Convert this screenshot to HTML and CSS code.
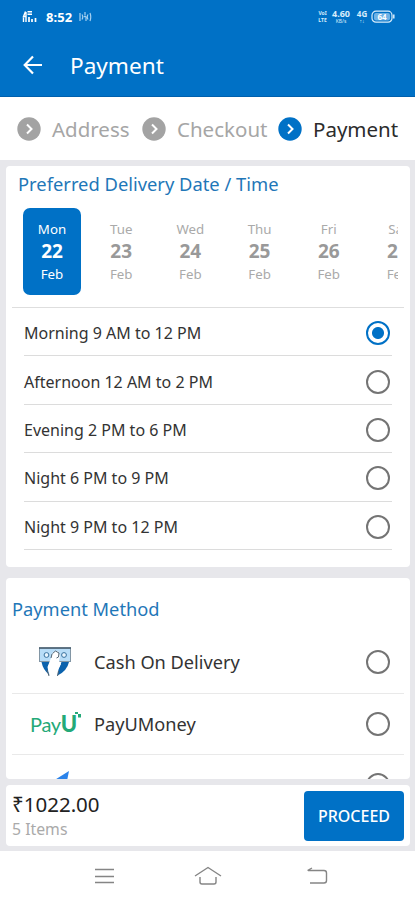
FILE: index.html
```html
<!DOCTYPE html>
<html lang="en">
<head>
    <meta charset="UTF-8">
    <meta name="viewport" content="width=device-width, initial-scale=1.0">
    <title>Payment</title>
    <link rel="stylesheet" href="styles.css">
</head>
<body>
    <div class="header">
        <div class="status">
            <svg class="signal" width="18" height="14" viewBox="0 0 18 14" fill="none" stroke="#fff">
                <path d="M3.500 1.500L1.500 6.500h3M4 2v10M5.500 1.800H10M5.500 4.300H10M1.500 7.500v4.500" stroke-width="1.400"/>
                <path d="M7 12V7M10 12V9M13.500 12V8" stroke-width="1.700"/>
            </svg>
            <span class="clock">8:52</span>
            <svg class="hotspot" width="14" height="12" viewBox="0 0 14 12" fill="none" stroke="#a5d0f0" stroke-width="1.200">
                <path d="M2 2v8M4 3.500q1.500 2.500 0 5M7 1v3M6 6l1-1 1 1v4M10 3.500q-1.500 2.500 0 5M12 2q1.500 4 0 8"/>
            </svg>
            <div class="tiny volte"><span>VoI</span><span>LTE</span></div>
            <div class="tiny speed"><b>4.60</b><span>KB/s</span></div>
            <div class="tiny net"><b>4G</b><span>↑↓</span></div>
            <svg width="24" height="14" viewBox="0 0 24 14" fill="none" stroke="#d9edfb">
                <rect x="1" y="1.200" width="20" height="11" rx="4" stroke-width="1.200"/>
                <rect x="3" y="3" width="16" height="7.500" rx="2" fill="#6fb2e5" stroke="none"/>
                <path d="M22.800 4.500v4" stroke-width="1.500"/>
                <text x="11" y="9.800" class="level">64</text>
            </svg>
        </div>
        <div class="title">
            <svg width="20" height="20" viewBox="0 0 20 20" fill="none" stroke="#fff" stroke-width="2.200">
                <path d="M19 10H2M10 1.500L1.700 10l8.300 8.500"/>
            </svg>
            <h1>Payment</h1>
        </div>
    </div>

    <div class="steps">
        <div class="step address">
            <svg width="24" height="24" viewBox="0 0 24 24"><circle cx="12" cy="12" r="11.700"/><path d="M10 7.500l4.500 4.500-4.500 4.500"/></svg>
            <span>Address</span>
        </div>
        <div class="step checkout">
            <svg width="24" height="24" viewBox="0 0 24 24"><circle cx="12" cy="12" r="11.700"/><path d="M10 7.500l4.500 4.500-4.500 4.500"/></svg>
            <span>Checkout</span>
        </div>
        <div class="step active">
            <svg width="24" height="24" viewBox="0 0 24 24"><circle cx="12" cy="12" r="11.700"/><path d="M10 7.500l4.500 4.500-4.500 4.500"/></svg>
            <span>Payment</span>
        </div>
    </div>

    <div class="content">
        <div class="card delivery">
            <h2>Preferred Delivery Date / Time</h2>
            <div class="dates">
                <div class="date selected"><span>Mon</span><b>22</b><span>Feb</span></div>
                <div class="date"><span>Tue</span><b>23</b><span>Feb</span></div>
                <div class="date"><span>Wed</span><b>24</b><span>Feb</span></div>
                <div class="date"><span>Thu</span><b>25</b><span>Feb</span></div>
                <div class="date"><span>Fri</span><b>26</b><span>Feb</span></div>
                <div class="date"><span>Sat</span><b>27</b><span>Feb</span></div>
            </div>
            <div class="slots">
                <label class="slot"><span>Morning 9 AM to 12 PM</span><input type="radio" name="slot" checked></label>
                <label class="slot"><span>Afternoon 12 AM to 2 PM</span><input type="radio" name="slot"></label>
                <label class="slot"><span>Evening 2 PM to 6 PM</span><input type="radio" name="slot"></label>
                <label class="slot"><span>Night 6 PM to 9 PM</span><input type="radio" name="slot"></label>
                <label class="slot"><span>Night 9 PM to 12 PM</span><input type="radio" name="slot"></label>
            </div>
        </div>

        <div class="card methods">
            <h2>Payment Method</h2>
            <label class="method">
                <span class="logo">
                    <svg width="34" height="32" viewBox="0 0 34 32">
                        <path d="M3.500 16H12l-2 5 1.500 8Q5 24 3.500 16z" fill="#0b62ad"/>
                        <path d="M31 16h-7.500l-3 7-1 6.500Q29 25 31 16z" fill="#0b62ad"/>
                        <rect x="1.500" y="2" width="31" height="13.500" fill="#b8ddf8" stroke="#8296a5"/>
                        <path d="M1 2h32" stroke="#42586a" stroke-width="1.500"/>
                        <circle cx="8.500" cy="9" r="2.400" fill="#e8f5ff" stroke="#37719e"/>
                        <circle cx="26" cy="9" r="2.400" fill="#e8f5ff" stroke="#37719e"/>
                        <path d="M11 29l-1.500-8 3.500-9 2-6 5-1 2 5-1 5 2 3-3 6-1 5-1.500-5 1-5-2-3-2 4-1 4z" fill="#fff"/>
                        <path d="M11 30L9 24M19.500 30l1-5M14.500 7.500l3-2.500 3.500 2-.5 4-2 1M14 8l-1 4" fill="none" stroke="#526473"/>
                    </svg>
                </span>
                <span class="name">Cash On Delivery</span><input type="radio" name="method">
            </label>
            <label class="method">
                <span class="logo payu"><span>Pay</span><b>U</b><svg width="6" height="8" viewBox="0 0 6 8" fill="#24a978"><path d="M0 0h3v2H0zM3 2h3v3.500H3z"/></svg></span>
                <span class="name">PayUMoney</span><input type="radio" name="method">
            </label>
            <label class="method">
                <span class="logo">
                    <svg class="plane" width="30" height="28" viewBox="0 0 30 28"><path d="M28 0L4 15l9 3 10 7z" fill="#2b83ea"/></svg>
                </span>
                <span class="name">Paytm</span><input type="radio" name="method">
            </label>
        </div>

        <div class="card total">
            <div class="sum">
                <span class="amount">₹1022.00</span>
                <span class="items">5 Items</span>
            </div>
            <button>PROCEED</button>
        </div>
    </div>

    <div class="navbar">
        <svg width="20" height="18" viewBox="0 0 20 18" fill="none" stroke="#858585" stroke-width="1.500"><path d="M0 2.500h19M0 9.500h19M0 15.500h19"/></svg>
        <svg class="home" width="28" height="20" viewBox="0 0 28 20" fill="none" stroke="#858585" stroke-width="1.400"><path d="M1 10L14 1.500 27 10M6 11v5q0 2 2 2h12q2 0 2-2v-5"/></svg>
        <svg width="22" height="18" viewBox="0 0 22 18" fill="none" stroke="#858585" stroke-width="1.400"><path d="M1 3.500h16q2.500 0 2.500 2.500v7.500q0 2.500-2.500 2.500H3M5 1L.5 3.500"/></svg>
    </div>
</body>
</html>
```
FILE: styles.css
```css
* {
    box-sizing: border-box;
}
body, html {
    height: 900px;
    margin: 0;
    padding: 0;
    overflow: hidden;
    font-family: "Noto Sans", "Open Sans", sans-serif;
    background-color: #e7e7eb;
}
body {
    display: flex;
    flex-direction: column;
}
svg {
    display: block;
    flex: none;
}
h1, h2 {
    margin: 0;
    font-weight: 400;
    white-space: nowrap;
}
.header {
    height: 97px;
    flex: none;
    background-color: #0071c6;
    border-bottom: 1px solid #0060ad;
    color: #fff;
}
.status {
    height: 34px;
    padding: 0 20px 0 22px;
    display: flex;
    align-items: center;
}
.clock {
    width: 29px;
    margin-left: 6px;
    font-size: 13px;
    font-weight: 700;
    letter-spacing: 0.1px;
}
.hotspot {
    margin-left: 3px;
    margin-right: auto;
}
.tiny {
    display: flex;
    flex-direction: column;
    align-items: center;
    font-size: 5px;
    line-height: 7px;
    color: #d9edfb;
}
.volte {
    width: 11px;
    font-weight: 700;
}
.speed {
    width: 20px;
    margin-left: 3px;
}
.speed b {
    font-size: 9px;
    line-height: 9px;
}
.net {
    width: 10px;
    margin-left: 6px;
    margin-right: 4px;
}
.net b {
    font-size: 8px;
    line-height: 8px;
}
.level {
    font-size: 8px;
    font-weight: 700;
    text-anchor: middle;
    fill: #fff;
    stroke: none;
}
.title {
    height: 62px;
    padding-left: 23px;
    display: flex;
    align-items: center;
    gap: 27px;
}
.title h1 {
    font-size: 22.6px;
}
.steps {
    height: 63px;
    flex: none;
    padding: 0 0 0 17px;
    display: flex;
    align-items: center;
    background-color: #fff;
}
.step {
    display: flex;
    align-items: center;
    gap: 11px;
    width: 125px;
    flex: none;
    font-size: 20.5px;
    color: #a6a6a6;
    white-space: nowrap;
}
.step.checkout {
    width: 136px;
}
.step circle {
    fill: #a3a3a3;
}
.step path {
    fill: none;
    stroke: #fff;
    stroke-width: 2;
}
.step.active {
    color: #2c2c2c;
}
.step.active circle {
    fill: #0071c6;
}
.content {
    height: 691px;
    flex: none;
    padding: 6px 5px 0 6px;
}
.card {
    background-color: #fff;
    border-radius: 4px;
    overflow: hidden;
}
.card h2 {
    color: #1f77b8;
}
.delivery {
    height: 401px;
}
.delivery h2 {
    height: 42px;
    padding: 4px 0 0 12px;
    font-size: 18.35px;
    line-height: 27px;
}
.dates {
    height: 99px;
    margin: 0 12px 0 17px;
    display: flex;
    gap: 11.2px;
    overflow: hidden;
}
.date {
    width: 58px;
    height: 87px;
    flex: none;
    padding-top: 10px;
    border-radius: 7px;
    display: flex;
    flex-direction: column;
    align-items: center;
    font-size: 13.3px;
    line-height: 22px;
    color: #aaa;
}
.date b {
    font-size: 19px;
    line-height: 23px;
    color: #999;
}
.date.selected, .date.selected b {
    background-color: #0071c6;
    color: #fff;
}
.slots {
    margin: 0 6px;
    padding: 0 12px;
    border-top: 1px solid #dedede;
}
.slot {
    height: 48.4px;
    padding-top: 3px;
    padding-right: 2px;
    border-bottom: 1px solid #dcdcdc;
    display: flex;
    align-items: center;
    justify-content: space-between;
    font-size: 16px;
    color: #333;
}
input[type="radio"] {
    appearance: none;
    width: 24px;
    height: 24px;
    margin: 0;
    flex: none;
    border: 2px solid #747474;
    border-radius: 50%;
}
input[type="radio"]:checked {
    border-color: #0071c6;
    background: radial-gradient(circle, #0071c6 5.5px, #fff 6.5px);
}
.methods {
    height: 201px;
    margin-top: 11px;
    padding: 0 6px;
}
.methods h2 {
    height: 54px;
    padding-top: 17px;
    font-size: 18.25px;
    line-height: 27px;
}
.method {
    height: 61.5px;
    padding-right: 14px;
    border-bottom: 1px solid #e9e9e9;
    display: flex;
    align-items: center;
    font-size: 18.2px;
    color: #333;
}
.logo {
    width: 82px;
    flex: none;
    display: flex;
    justify-content: center;
    padding-left: 4px;
}
.name {
    flex: 1;
}
.payu {
    justify-content: flex-start;
    padding-left: 18px;
    font-family: Lato, sans-serif;
    font-size: 20px;
    line-height: 24px;
    letter-spacing: -0.3px;
    color: #24a978;
}
.payu b {
    width: 14px;
    font-size: 22px;
    font-weight: 900;
    letter-spacing: -1px;
}
.plane {
    margin-left: 2px;
}
.total {
    height: 61px;
    margin-top: 6px;
    padding: 0 6px;
    display: flex;
    align-items: center;
    justify-content: space-between;
}
.sum {
    display: flex;
    flex-direction: column;
}
.amount {
    font-size: 20.5px;
    line-height: 27px;
    color: #222;
}
.items {
    font-size: 15.8px;
    line-height: 22px;
    color: #aaa;
}
button {
    width: 100px;
    height: 50px;
    padding: 0;
    border: none;
    border-radius: 4px;
    background-color: #0071c6;
    color: #fff;
    font-family: inherit;
    font-size: 16px;
    font-weight: 500;
}
.navbar {
    height: 49px;
    flex: none;
    padding: 0 86px 0 95px;
    display: flex;
    align-items: center;
    justify-content: space-between;
    background-color: #fff;
}
.home {
    margin-right: 7px;
}
```
